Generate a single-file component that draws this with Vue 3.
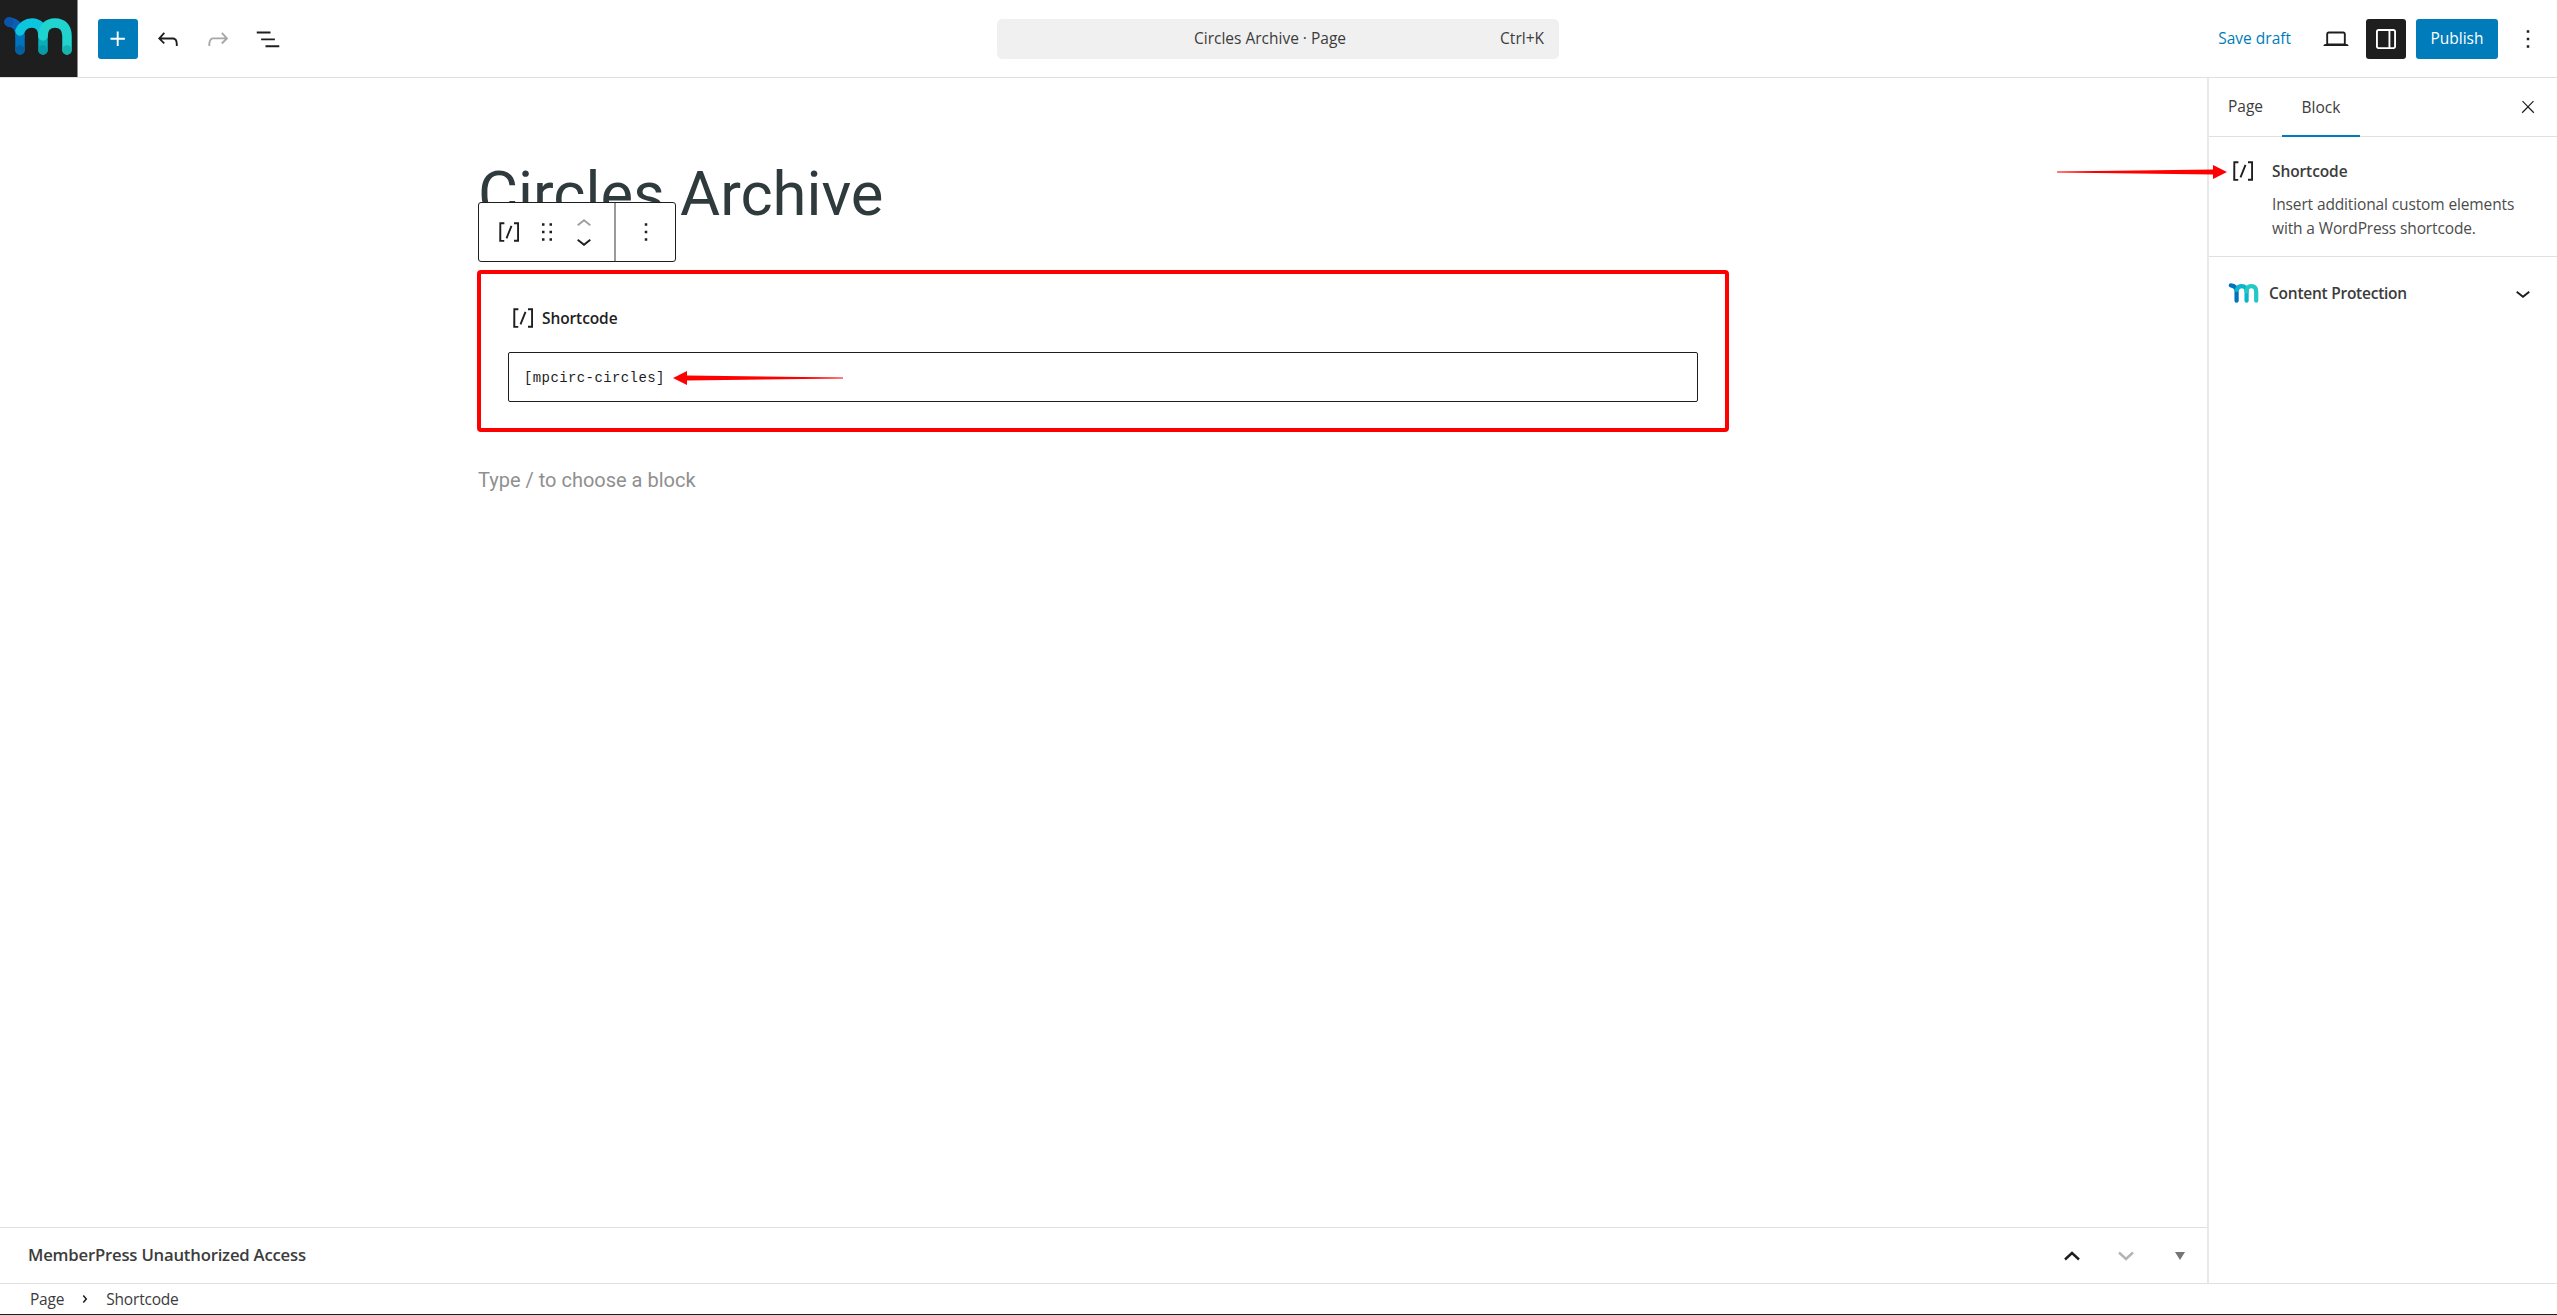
<script setup>
const icons = {
  plus: 'M11 12.5V17.5H12.5V12.5H17.5V11H12.5V6H11V11H6V12.5H11Z',
  undo: 'M18.3 11.7c-.6-.6-1.4-.9-2.3-.9H6.7l2.9-3.3-1.1-1-4.5 5L8.5 16l1-1-2.7-2.7H16c.5 0 .9.2 1.3.5 1 1 1 3.4 1 4.5v.3h1.5v-.2c0-1.5 0-4.3-1.5-5.7z',
  redo: 'M15.6 6.5l-1.1 1 2.9 3.3H8c-.9 0-1.7.3-2.3.9-1.4 1.5-1.4 4.2-1.4 5.6v.2h1.5v-.3c0-1.1 0-3.5 1-4.5.3-.3.7-.5 1.3-.5h9.2L14.5 15l1.1 1.1 4.6-4.6-4.6-5z',
  list: 'M3 6h11v1.5H3V6Zm3.5 5.5h11V13h-11v-1.5ZM21 17H10v1.5h11V17Z',
  desktop: 'M20.5 16h-.7V8c0-1.1-.9-2-2-2H6.2c-1.1 0-2 .9-2 2v8h-.7c-.8 0-1.5.7-1.5 1.5h20c0-.8-.7-1.5-1.5-1.5zM5.7 8c0-.3.2-.5.5-.5h11.6c.3 0 .5.2.5.5v7.6H5.7V8z',
  drawer: 'M18 4H6c-1.1 0-2 .9-2 2v12c0 1.1.9 2 2 2h12c1.1 0 2-.9 2-2V6c0-1.1-.9-2-2-2zm-4 14.5H6c-.3 0-.5-.2-.5-.5V6c0-.3.2-.5.5-.5h8v13zm4.5-.5c0 .3-.2.5-.5.5h-2.5v-13H18c.3 0 .5.2.5.5v12z',
  more: 'M13 19h-2v-2h2v2zm0-6h-2v-2h2v2zm0-6h-2V5h2v2z',
  shortcode: 'M16 4.2v1.5h2.5v12.5H16v1.5h4V4.2h-4zM4.2 19.8h4v-1.5H5.8V5.8h2.5V4.2h-4l-.1 15.6zm5.1-3.1l1.4.6 4-10-1.4-.6-4 10z',
  drag: 'M8 7h2V5H8v2zm0 6h2v-2H8v2zm0 6h2v-2H8v2zm6-14v2h2V5h-2zm0 8h2v-2h-2v2zm0 6h2v-2h-2v2z',
  up: 'M6.5 12.4L12 8l5.5 4.4-.9 1.2L12 10l-4.5 3.6-1-1.2z',
  down: 'M17.5 11.6L12 16l-5.5-4.4.9-1.2L12 14l4.5-3.6 1 1.2z',
  close: 'M13 11.8l6.1-6.3-1-1-6.1 6.2-6.1-6.3-1 1 6.1 6.3-6.5 6.7 1 1 6.5-6.6 6.5 6.6 1-1z',
  crumb: 'M10.8622 8.04053L14.2805 12.0286L10.8622 16.0167L9.72327 15.0405L12.3049 12.0286L9.72327 9.01672L10.8622 8.04053Z'
}
</script>

<template>
  <div class="app">
    <header class="top">
      <div class="top-left">
        <div class="logo">
          <svg width="78" height="77" viewBox="0 0 78 77" fill="none" stroke-width="9.5" stroke-linecap="round">
            <path d="M9 22C16 23 20 27 20 36" stroke="#0a5fb4" />
            <path d="M20 36V50" stroke="#0172bc" />
            <path d="M20 31C22 26 27 23 32 23C38 23 43 27 43 36" stroke="#0cc6e0" />
            <path d="M43 36V50" stroke="#08aebb" />
            <path d="M43 36C43 27 48 23 55 23C62 23 67 27 67 36V50" stroke="#20d3cf" />
            <circle cx="9" cy="22" r="4.7" fill="#0b55a8" stroke="none" />
            <circle cx="20" cy="50" r="4.7" fill="#045f9f" stroke="none" />
            <circle cx="43" cy="50" r="4.7" fill="#079ba6" stroke="none" />
            <circle cx="67" cy="50" r="4.7" fill="#17b3ae" stroke="none" />
          </svg>
        </div>
        <div class="tools">
          <button class="ib primary"><svg class="ic" viewBox="0 0 24 24"><path :d="icons.plus" /></svg></button>
          <button class="ib"><svg class="ic" viewBox="0 0 24 24"><path :d="icons.undo" /></svg></button>
          <button class="ib faded"><svg class="ic" viewBox="0 0 24 24"><path :d="icons.redo" /></svg></button>
          <button class="ib"><svg class="ic" viewBox="0 0 24 24"><path :d="icons.list" /></svg></button>
        </div>
      </div>
      <div class="command">
        <span class="command-title">Circles Archive · Page</span>
        <span class="command-key">Ctrl+K</span>
      </div>
      <div class="top-right">
        <span class="save">Save draft</span>
        <button class="ib"><svg class="ic" viewBox="0 0 24 24"><path :d="icons.desktop" /></svg></button>
        <button class="ib dark"><svg class="ic" viewBox="0 0 24 24"><path :d="icons.drawer" /></svg></button>
        <button class="publish">Publish</button>
        <button class="ib"><svg class="ic" viewBox="0 0 24 24"><path :d="icons.more" /></svg></button>
      </div>
    </header>

    <div class="main">
      <div class="editor">
        <div class="canvas">
          <div class="content">
            <h1 class="title">Circles Archive</h1>
            <div class="block-toolbar">
              <div class="tb-group first">
                <svg class="ic" viewBox="0 0 24 24"><path :d="icons.shortcode" /></svg>
                <svg class="ic drag" viewBox="0 0 24 24"><path :d="icons.drag" /></svg>
                <div class="movers">
                  <svg class="ic faded-ic" viewBox="0 0 24 24"><path :d="icons.up" /></svg>
                  <svg class="ic" viewBox="0 0 24 24"><path :d="icons.down" /></svg>
                </div>
              </div>
              <div class="tb-group last">
                <svg class="ic" viewBox="0 0 24 24"><path :d="icons.more" /></svg>
              </div>
            </div>
            <div class="block">
              <div class="block-label">
                <svg class="ic" viewBox="0 0 24 24"><path :d="icons.shortcode" /></svg>
                <span>Shortcode</span>
              </div>
              <div class="code-input">[mpcirc-circles]</div>
            </div>
            <p class="placeholder">Type / to choose a block</p>
          </div>
        </div>
        <div class="metabox">
          <span class="metabox-title">MemberPress Unauthorized Access</span>
          <div class="metabox-ctrl">
            <svg class="mb-ic" viewBox="0 0 16 10" fill="none" stroke="#1e1e1e" stroke-width="2.4"><path d="M1 8.5L8 2l7 6.5" /></svg>
            <svg class="mb-ic" viewBox="0 0 16 10" fill="none" stroke="#b4b4b4" stroke-width="2.4"><path d="M1 1.5L8 8l7-6.5" /></svg>
            <svg class="mb-tri" viewBox="0 0 10 8"><path d="M0 0h10L5 8z" fill="#757575" /></svg>
          </div>
        </div>
      </div>

      <aside class="side">
        <div class="tabs">
          <span class="tab">Page</span>
          <span class="tab active">Block</span>
          <svg class="close" viewBox="0 0 24 24"><path :d="icons.close" /></svg>
        </div>
        <div class="card">
          <svg class="ic card-ic" viewBox="0 0 24 24"><path :d="icons.shortcode" /></svg>
          <div class="card-body">
            <div class="card-title">Shortcode</div>
            <div class="card-desc">Insert additional custom elements<br />with a WordPress shortcode.</div>
          </div>
        </div>
        <div class="panel-row">
          <svg class="mini-logo" viewBox="0 0 78 52" fill="none" stroke-width="11" stroke-linecap="round">
            <path d="M6 6C16 7 21 13 21 22V46" stroke="#0172bc" />
            <path d="M21 18C24 11 29 8 34 8C42 8 47 13 47 22V46" stroke="#0cb4cf" />
            <path d="M47 22C47 13 52 8 59 8C67 8 72 13 72 22V46" stroke="#20c9c6" />
          </svg>
          <span class="panel-title">Content Protection</span>
          <svg class="ic panel-chev" viewBox="0 0 24 24"><path :d="icons.down" /></svg>
        </div>
      </aside>
    </div>

    <footer class="crumbs">
      <span>Page</span>
      <svg class="crumb-ic" viewBox="0 0 24 24"><path :d="icons.crumb" /></svg>
      <span>Shortcode</span>
    </footer>

    <svg class="arrow arrow-a" width="170" height="14" viewBox="0 0 170 14"><path d="M0 6.5L156 4.6V0L170 7L156 14V9.4L0 7.5Z" fill="#f00" /></svg>
    <svg class="arrow arrow-b" width="170" height="14" viewBox="0 0 170 14"><path d="M170 6.5L14 4.6V0L0 7L14 14V9.4L170 7.5Z" fill="#f00" /></svg>
  </div>
</template>

<style scoped>
.app {
  position: relative;
  width: 2557px;
  height: 1315px;
  display: flex;
  flex-direction: column;
  background: #fff;
  color: #1e1e1e;
  font-family: "Open Sans", "Noto Sans", sans-serif;
  overflow: hidden;
  border-bottom: 1px solid #1e1e1e;
  box-sizing: border-box;
}
.top {
  height: 78px;
  flex: none;
  box-sizing: border-box;
  border-bottom: 1px solid #e0e0e0;
  display: grid;
  grid-template-columns: 997px 562px 1fr;
  align-items: center;
}
.top-left { display: flex; align-items: center; height: 77px; }
.logo { width: 78px; height: 77px; background: #1e1e1e; border-right: 1px solid #8c8c8c; box-sizing: border-box; }
.logo svg { display: block; }
.tools { display: flex; gap: 10px; margin-left: 20px; }
.ib {
  width: 40px; height: 40px; padding: 0; border: 0; background: none;
  border-radius: 3px; display: flex; align-items: center; justify-content: center;
}
.ic { width: 30px; height: 30px; fill: #1e1e1e; display: block; flex: none; }
.ib.primary { background: #007cba; }
.ib.primary .ic { fill: #fff; }
.ib.faded .ic { fill: #a8a8a8; }
.ib.dark { background: #1e1e1e; }
.ib.dark .ic { fill: #fff; }
.command {
  height: 40px; background: #f0f0f0; border-radius: 5px; box-sizing: border-box;
  display: flex; align-items: center; position: relative; justify-content: center;
  font-size: 15.5px; color: #3c3c3c; letter-spacing: 0; padding: 0 16px 2px 0;
}
.command-key { position: absolute; right: 15px; top: 8px; }
.top-right { display: flex; align-items: center; justify-content: flex-end; gap: 10px; padding-right: 9px; }
.save { color: #007cba; font-size: 15.5px; margin-right: 15px; padding-bottom: 2px; }
.publish {
  width: 82px; height: 40px; border: 0; border-radius: 3px; background: #007cba;
  color: #fff; font: 15.5px "Open Sans", sans-serif; padding: 0 0 2px;
}
.main { flex: 1; display: flex; min-height: 0; }
.editor { flex: 1; min-width: 0; display: flex; flex-direction: column; }
.canvas { flex: 1; min-height: 0; padding-left: 478px; }
.content { width: 1251px; position: relative; }
.title {
  margin: 0; font: 400 61.5px/70px Roboto, sans-serif; color: #2f3a3d;
  padding-top: 81px; height: 192px; box-sizing: border-box; white-space: nowrap;
}
.block-toolbar {
  position: absolute; left: 0; top: 124px; width: 198px; height: 60px; box-sizing: border-box;
  border: 1px solid #1e1e1e; border-radius: 3px; display: flex; background: #fff;
}
.tb-group { display: flex; align-items: center; }
.tb-group.first { width: 137px; border-right: 2px solid #9a9a9a; padding-left: 15px; box-sizing: border-box; }
.tb-group.last { flex: 1; justify-content: center; }
.drag { margin-left: 8px; }
.movers { display: flex; flex-direction: column; margin-left: 7px; }
.movers .ic { margin: -6.5px 0; }
.faded-ic { fill: #a0a0a0; }
.block {
  height: 162px; box-sizing: border-box; margin-left: -1px; width: 1252px;
  border: 4px solid #f00; border-radius: 4px; padding: 29px 27px 0;
}
.block-label { display: flex; align-items: center; gap: 4px; height: 30px; font-size: 15.5px; font-weight: 600; letter-spacing: -.1px; }
.block-label span { margin-top: -1px; }
.code-input {
  margin-top: 19px; height: 50px; box-sizing: border-box; border: 1px solid #1e1e1e; border-radius: 2px;
  display: flex; align-items: center; padding-left: 15px; padding-top: 2px;
  font: 14px "Liberation Mono", monospace; letter-spacing: .4px;
}
.placeholder { margin: 34px 0 0; font: 400 20px/28px Roboto, sans-serif; color: #8f8f8f; }
.metabox {
  height: 56px; flex: none; box-sizing: border-box; border-top: 1px solid #e0e0e0;
  display: flex; align-items: center; justify-content: space-between; padding: 0 22px 0 28px;
}
.metabox-title { font-size: 16.7px; font-weight: 600; color: #3c3c3c; letter-spacing: -.2px; padding-bottom: 2px; }
.metabox-ctrl { display: flex; align-items: center; gap: 38px; }
.mb-ic { width: 16px; height: 10px; display: block; }
.mb-tri { width: 10px; height: 8px; display: block; margin-left: 3px; }
.side { width: 350px; flex: none; box-sizing: border-box; border-left: 2px solid #e8e8e8; }
.tabs {
  height: 59px; box-sizing: border-box; border-bottom: 1px solid #e0e0e0;
  display: flex; position: relative; align-items: stretch;
}
.tab { font-size: 15.5px; display: flex; align-items: center; justify-content: center; color: #3c3c3c; padding-bottom: 2px; box-sizing: border-box; }
.tab:first-child { width: 73px; }
.tab.active { width: 78px; box-shadow: inset 0 -2px 0 #007cba; height: 59px; }
.close { position: absolute; right: 19px; top: 19px; width: 20px; height: 20px; fill: #1e1e1e; }
.card {
  height: 120px; box-sizing: border-box; border-bottom: 1px solid #e0e0e0;
  display: flex; padding: 19px 0 0 19px;
}
.card-body { margin-left: 14px; padding-top: 5px; }
.card-title { font-size: 15.5px; font-weight: 600; line-height: 20px; color: #3c3c3c; letter-spacing: -.1px; }
.card-desc { font-size: 15.5px; line-height: 23.5px; margin-top: 12px; color: #4c4c4c; letter-spacing: -.13px; white-space: nowrap; }
.panel-row { height: 71px; display: flex; align-items: center; padding-left: 19px; position: relative; }
.mini-logo { width: 31px; height: 20px; }
.panel-title { margin-left: 10px; font-size: 15.5px; font-weight: 600; color: #3c3c3c; letter-spacing: -.25px; }
.panel-chev { position: absolute; right: 19px; top: 21px; }
.crumbs {
  height: 31px; flex: none; box-sizing: border-box; border-top: 1px solid #e0e0e0;
  display: flex; align-items: center; padding-left: 30px; font-size: 15.5px; color: #3c3c3c; letter-spacing: -.2px;
}
.crumb-ic { width: 24px; height: 24px; margin: 0 9px 0 9px; fill: #1e1e1e; }
.arrow { position: absolute; display: block; }
.arrow-a { left: 2057px; top: 165px; }
.arrow-b { left: 673px; top: 371px; }
</style>

<style>
html, body { margin: 0; background: #fff; overflow: hidden; }
</style>
